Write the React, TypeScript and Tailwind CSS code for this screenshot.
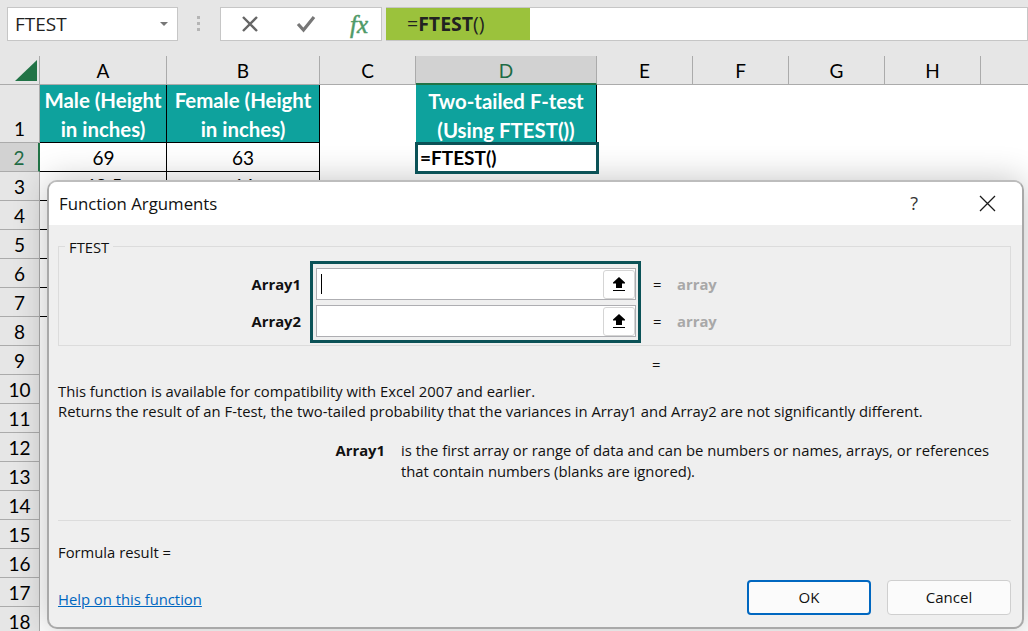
import React from "react";

const cols = [
  { k: "A", w: "w-[127px]" },
  { k: "B", w: "w-[153px]" },
  { k: "C", w: "w-[96px]" },
  { k: "D", w: "w-[181px]" },
  { k: "E", w: "w-[96px]" },
  { k: "F", w: "w-[96px]" },
  { k: "G", w: "w-[96px]" },
  { k: "H", w: "w-[96px]" },
];

function RowHead({ n, h, active }: { n: number; h: string; active?: boolean }) {
  return (
    <div
      className={`${h} w-[40px] shrink-0 flex items-end justify-center border-b border-r border-[#ababab] text-[19px] leading-[27px] ${
        active ? "bg-[#d2d2d2] text-[#1f6b45] border-r-2 border-r-[#217346]" : "bg-[#e6e6e6] text-black"
      }`}
    >
      {n}
    </div>
  );
}

function Upload() {
  return (
    <div className="w-[32px] h-[29px] ml-auto bg-white border border-[#d5d5d5] rounded-[3px] flex items-center justify-center">
      <svg width="14" height="17" viewBox="0 0 14 17">
        <path d="M7 1 L13 6.5 L13 7.5 L10 7.5 L10 12 L4 12 L4 7.5 L1 7.5 L1 6.5 Z" fill="#000" />
        <rect x="1" y="14" width="12" height="1" fill="#000" />
      </svg>
    </div>
  );
}

function Input({ caret }: { caret?: boolean }) {
  return (
    <div className="h-[32px] w-[320px] bg-white border border-[#aeaeb2] flex items-center">
      {caret ? <div className="ml-[4px] w-px h-[20px] bg-black" /> : null}
      <Upload />
    </div>
  );
}

function Dialog() {
  return (
    <div className="absolute left-[47px] top-[180px] w-[977px] h-[449px] rounded-[10px] border-2 border-[#a9a9a9] border-t-[#bdbdbd] bg-[#efefef] overflow-hidden shadow-[0_0_34px_rgba(0,0,0,0.24)] flex flex-col font-['Open_Sans',sans-serif] text-[14.8px] text-[#111]">
      <div className="h-[43px] shrink-0 bg-white flex items-center pl-[10px] pr-[26px]">
        <span className="text-[16.8px]">Function Arguments</span>
        <span className="ml-auto mr-[61px] text-[18px] text-[#333]">?</span>
        <svg width="17" height="17" viewBox="0 0 17 17" stroke="#1a1a1a" strokeWidth="1.3">
          <path d="M1 1 L16 16 M16 1 L1 16" />
        </svg>
      </div>
      <div className="flex-1 flex flex-col px-[9px] pt-[21px]">
        <div className="relative h-[100px] w-[953px] border border-[#dcdcdc] flex">
          <span className="absolute left-[6px] top-[-9px] bg-[#efefef] px-[4px] leading-[18px]">FTEST</span>
          <div className="w-[242px] flex flex-col items-end pt-[28px] gap-[19px] font-bold">
            <span className="leading-[18px]">Array1</span>
            <span className="leading-[18px]">Array2</span>
          </div>
          <div className="ml-[9px] mt-[14px] h-[82px] w-[331px] border-[3px] border-[#0b5257] flex flex-col gap-[5px] pt-[4px] pl-[3px]">
            <Input caret />
            <Input />
          </div>
          <div className="ml-[12px] flex flex-col pt-[28px] gap-[19px]">
            <div className="flex leading-[18px]">
              <span className="w-[24px]">=</span>
              <span className="font-bold text-[#a8a8a8]">array</span>
            </div>
            <div className="flex leading-[18px]">
              <span className="w-[24px]">=</span>
              <span className="font-bold text-[#a8a8a8]">array</span>
            </div>
          </div>
        </div>
        <div className="ml-[594px] mt-[9px] leading-[18px]">=</div>
        <div className="mt-[8px] leading-[20px]">
          <div>This function is available for compatibility with Excel 2007 and earlier.</div>
          <div>Returns the result of an F-test, the two-tailed probability that the variances in Array1 and Array2 are not significantly different.</div>
        </div>
        <div className="mt-[19px] flex leading-[21px]">
          <span className="w-[343px] text-right font-bold pr-[16px]">Array1</span>
          <span className="w-[600px]">
            is the first array or range of data and can be numbers or names, arrays, or references
            <br />
            that contain numbers (blanks are ignored).
          </span>
        </div>
        <div className="mt-[38px] h-px w-[953px] bg-[#dcdcdc]" />
        <div className="mt-[21px] leading-[20px]">Formula result =</div>
        <div className="mt-[18px] flex items-start">
          <span className="mt-[9px] text-[#0067c0] underline leading-[20px]">Help on this function</span>
          <div className="ml-auto mr-[2px] flex gap-[16px] text-[15px]">
            <button className="w-[124px] h-[35px] rounded-[4px] bg-[#fbfbfb] border-2 border-[#0067c0] text-[#111]">OK</button>
            <button className="w-[124px] h-[35px] rounded-[4px] bg-[#fbfbfb] border border-[#cfcfcf] text-[#111]">Cancel</button>
          </div>
        </div>
      </div>
    </div>
  );
}

export default function App() {
  const rows = [4, 5, 6, 7, 8, 9, 10, 11, 12, 13, 14, 15, 16, 17, 18];
  const cell = "shrink-0 flex items-center justify-center";
  const head = "bg-[#0ea29d] text-center text-white font-bold text-[20.4px] leading-[29px] h-[58px] pt-[3px] border-black";
  return (
    <div className="relative w-[1028px] h-[631px] overflow-hidden bg-white font-['Lato',sans-serif] text-black">
      <div className="h-[56px] bg-[#e6e6e6] pt-[7px] flex items-start">
        <div className="ml-[7px] w-[171px] h-[34px] bg-white border border-[#c6c6c6] flex items-center pl-[7px] pr-[9px] font-['Open_Sans',sans-serif] text-[19px] text-[#222]">
          FTEST
          <span className="ml-auto w-0 h-0 border-x-[4px] border-x-transparent border-t-[4px] border-t-[#777]" />
        </div>
        <div className="ml-[19px] mt-[9px] w-[3px] flex flex-col gap-[3px]">
          <span className="h-[3px] bg-[#b5b5b5]" />
          <span className="h-[3px] bg-[#b5b5b5]" />
          <span className="h-[3px] bg-[#b5b5b5]" />
        </div>
        <div className="ml-[20px] w-[162px] h-[34px] bg-white border border-[#c6c6c6] flex items-center">
          <svg className="ml-[20px]" width="18" height="18" viewBox="0 0 18 18" stroke="#666" strokeWidth="2.4">
            <path d="M2 2 L16 16 M16 2 L2 16" />
          </svg>
          <svg className="ml-[37px]" width="20" height="18" viewBox="0 0 20 18" fill="none" stroke="#777" strokeWidth="3.2">
            <path d="M2 9 L7.5 15 L18 2" />
          </svg>
          <span className="ml-[34px] font-['Liberation_Serif',serif] italic text-[25px] leading-none text-[#4f9a68] [-webkit-text-stroke:0.5px_#4f9a68]">fx</span>
        </div>
        <div className="ml-[4px] flex-1 h-[34px] bg-white border-y border-r border-[#c6c6c6] flex">
          <div className="w-[144px] bg-[#9bc23c] pl-[21px] flex items-center font-['Open_Sans',sans-serif] text-[19.5px] text-[#222]">
            <span>=</span>
            <span className="font-bold">FTEST</span>
            <span>()</span>
          </div>
        </div>
      </div>

      <div className="flex h-[29px]">
        <div className="w-[40px] shrink-0 bg-[#e6e6e6] border-b border-r border-[#ababab] flex items-center pl-[15px]">
          <svg width="22" height="21" viewBox="0 0 22 21">
            <path d="M22 0 L22 21 L0 21 Z" fill="#217346" />
          </svg>
        </div>
        {cols.map((c) => (
          <div
            key={c.k}
            className={`${c.w} ${cell} pt-[3px] text-[19px] border-r ${
              c.k === "D"
                ? "bg-[#d2d2d2] text-[#1f6b45] border-b-2 border-b-[#217346] border-r-[#ababab]"
                : "bg-[#e6e6e6] border-b border-[#ababab]"
            }`}
          >
            {c.k}
          </div>
        ))}
        <div className="flex-1 bg-[#e6e6e6] border-b border-[#ababab]" />
      </div>

      <div className="flex">
        <RowHead n={1} h="h-[58px]" />
        <div className={`w-[127px] ${cell} ${head} border-r border-b`}>
          Male (Height<br />in inches)
        </div>
        <div className={`w-[153px] ${cell} ${head} border-r border-b`}>
          Female (Height<br />in inches)
        </div>
        <div className="w-[96px] shrink-0" />
        <div className={`w-[181px] ${cell} ${head} border-r`}>
          Two-tailed F-test<br />(Using FTEST())
        </div>
      </div>

      <div className="flex h-[29px]">
        <RowHead n={2} h="h-[29px]" active />
        <div className={`w-[127px] ${cell} pt-[3px] pl-px border-r border-b border-black text-[19px]`}>69</div>
        <div className={`w-[153px] ${cell} pt-[3px] border-r border-b border-black text-[19px]`}>63</div>
        <div className="w-[96px] shrink-0" />
        <div className="relative w-[181px] shrink-0">
          <div className="absolute left-[-1px] top-[-1px] w-[184px] h-[32px] border-[3px] border-[#0b5257] bg-white flex items-center pl-[2px] font-bold text-[19px] z-10">
            =FTEST()
          </div>
        </div>
      </div>

      <div className="flex h-[29px]">
        <RowHead n={3} h="h-[29px]" />
        <div className={`w-[127px] ${cell} pl-px border-r border-b border-black text-[19px]`}>68.5</div>
        <div className={`w-[153px] ${cell} border-r border-b border-black text-[19px]`}>64</div>
      </div>

      {rows.map((n) => (
        <div key={n} className="flex h-[29px]">
          <RowHead n={n} h="h-[29px]" />
          {n <= 7 ? <div className="w-[127px] shrink-0 border-b border-black" /> : null}
        </div>
      ))}

      <Dialog />
    </div>
  );
}
